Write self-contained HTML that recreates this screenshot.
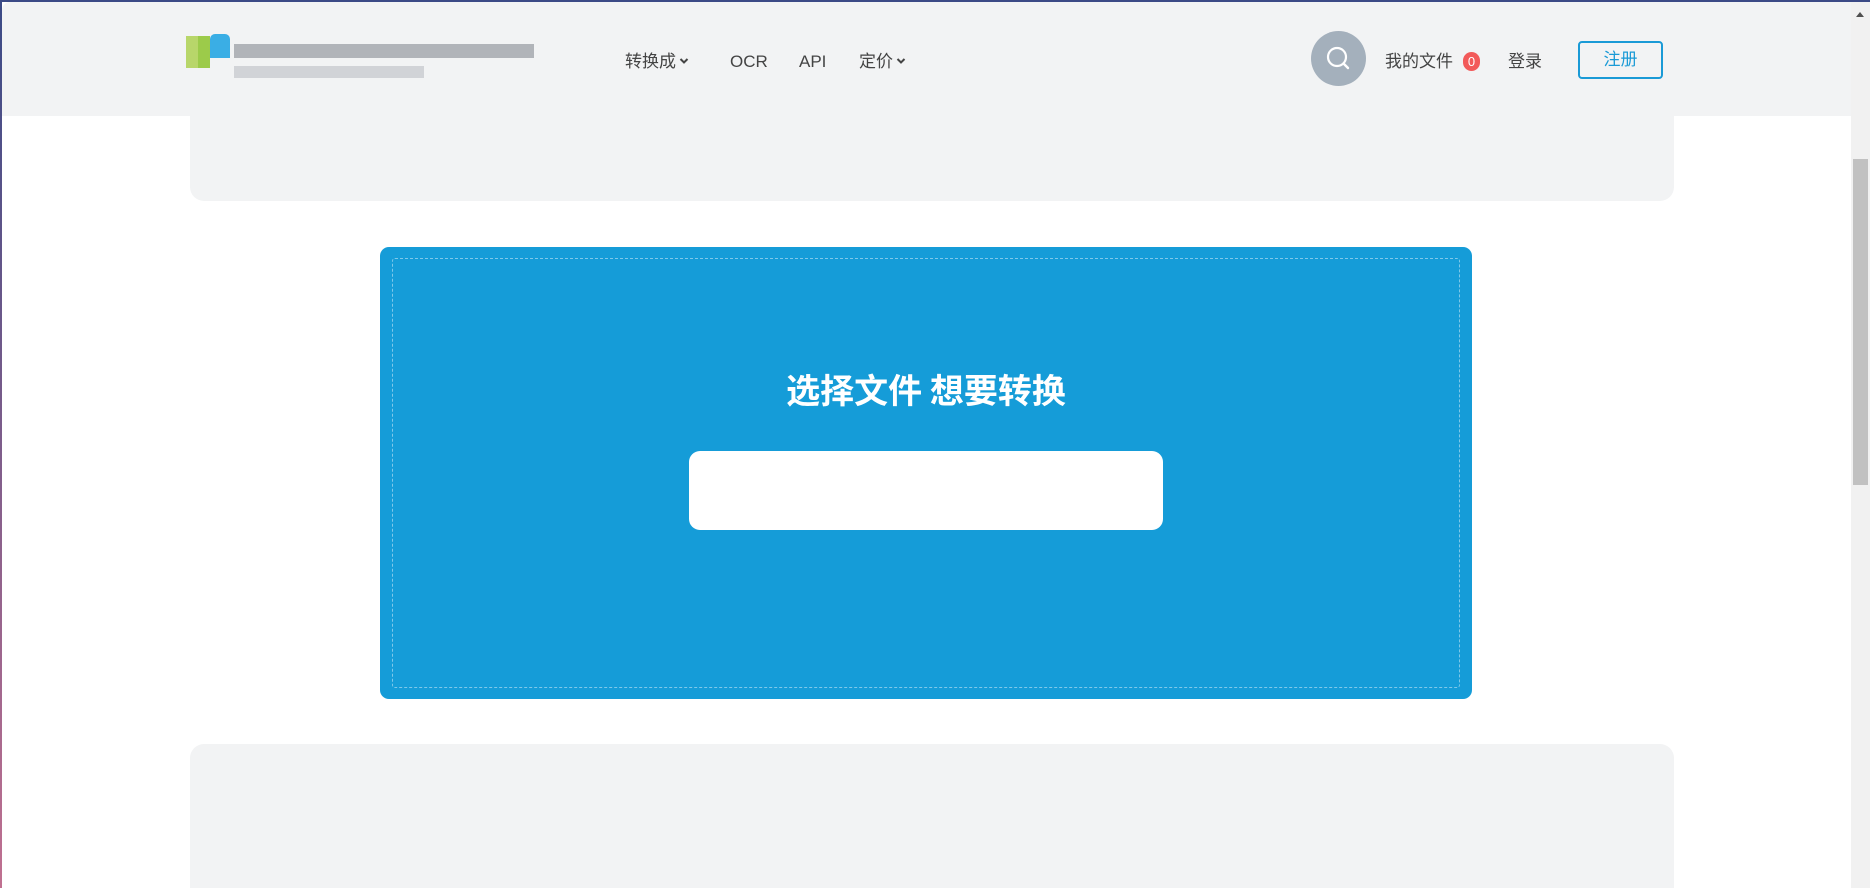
<!DOCTYPE html>
<html><head><meta charset="utf-8"><style>
*{margin:0;padding:0;box-sizing:border-box}
html,body{width:1870px;height:888px;overflow:hidden}
body{background:#fff;font-family:"Liberation Sans","Noto Sans CJK SC",sans-serif;position:relative}
.topline{position:absolute;left:0;top:0;width:1870px;height:2px;background:#3b4a86}
.card{position:absolute;background:#f2f3f4;border-radius:14px}
.nav{position:absolute;top:52px;font-size:17px;line-height:20px;color:#444;white-space:nowrap}
.chev{display:inline-block;vertical-align:middle;margin-left:3px;margin-top:-3px}
.blue{position:absolute;left:380px;top:247px;width:1092px;height:452px;background:#159cd8;border-radius:9px}
.dash{position:absolute;left:12px;top:11px;right:12px;bottom:11px;border:1px dashed rgba(255,255,255,.45);border-radius:3px}
.title{position:absolute;left:0;right:0;top:117px;text-align:center;color:#fff;font-size:34px;font-weight:bold;font-family:"Noto Sans CJK SC",sans-serif}
.btn{position:absolute;left:309px;top:204px;width:474px;height:79px;background:#fff;border-radius:11px}
.sb{position:absolute;left:1851px;top:2px;width:19px;height:886px;background:#f1f1f1}
.thumb{position:absolute;left:2px;top:157px;width:15px;height:326px;background:#c1c1c1}
</style></head><body>
<div class="topline"></div>
<div style="position:absolute;left:0;top:0;width:2px;height:888px;background:linear-gradient(#3b4a86,#c07090)"></div>
<div class="card" style="left:190px;top:100px;width:1484px;height:101px;border-top-left-radius:0;border-top-right-radius:0"></div>
<div style="position:absolute;left:2px;top:2px;width:1849px;height:114px;background:#f2f3f4;border-top-left-radius:8px"></div>
<div style="position:absolute;left:186px;top:36px;width:12px;height:32px;background:#b8d66a"></div>
<div style="position:absolute;left:198px;top:36px;width:12px;height:32px;background:#9ccb4a"></div>
<div style="position:absolute;left:210px;top:34px;width:20px;height:24px;background:#3aaee5;border-radius:5px 5px 0 0"></div>
<div style="position:absolute;left:234px;top:44px;width:300px;height:14px;background:#a0a4aa;opacity:.8"></div>
<div style="position:absolute;left:234px;top:66px;width:190px;height:12px;background:#c8cbd0;opacity:.8"></div>
<div class="nav" style="left:625px">转换成<svg class="chev" width="10" height="8" viewBox="0 0 10 8"><path d="M1.5 2 L5 5.5 L8.5 2" fill="none" stroke="#444" stroke-width="2"/></svg></div>
<div class="nav" style="left:730px">OCR</div>
<div class="nav" style="left:799px">API</div>
<div class="nav" style="left:859px">定价<svg class="chev" width="10" height="8" viewBox="0 0 10 8"><path d="M1.5 2 L5 5.5 L8.5 2" fill="none" stroke="#444" stroke-width="2"/></svg></div>
<div style="position:absolute;left:1311px;top:31px;width:55px;height:55px;border-radius:50%;background:#a4b0bc">
<svg width="55" height="55" viewBox="0 0 55 55"><circle cx="26" cy="26" r="9" fill="none" stroke="#fff" stroke-width="2.2"/><line x1="32.5" y1="32.5" x2="37" y2="37" stroke="#fff" stroke-width="2.4" stroke-linecap="round"/></svg></div>
<div class="nav" style="left:1385px">我的文件</div>
<div style="position:absolute;left:1463px;top:52px;width:17px;height:19px;border-radius:9px;background:#f25a5a;color:#fff;font-size:13px;text-align:center;line-height:19px">0</div>
<div class="nav" style="left:1508px">登录</div>
<div style="position:absolute;left:1578px;top:41px;width:85px;height:38px;border:2px solid #1a9ad6;border-radius:4px;color:#1a9ad6;font-size:17px;text-align:center;line-height:34px">注册</div>
<div class="blue"><div class="dash"></div><div class="title">选择文件 想要转换</div><div class="btn"></div></div>
<div class="card" style="left:190px;top:744px;width:1484px;height:144px;border-bottom-left-radius:0;border-bottom-right-radius:0"></div>
<div class="sb"><div style="position:absolute;left:5px;top:10px;width:0;height:0;border-left:4px solid transparent;border-right:4px solid transparent;border-bottom:5px solid #505050"></div><div class="thumb"></div></div>
</body></html>
